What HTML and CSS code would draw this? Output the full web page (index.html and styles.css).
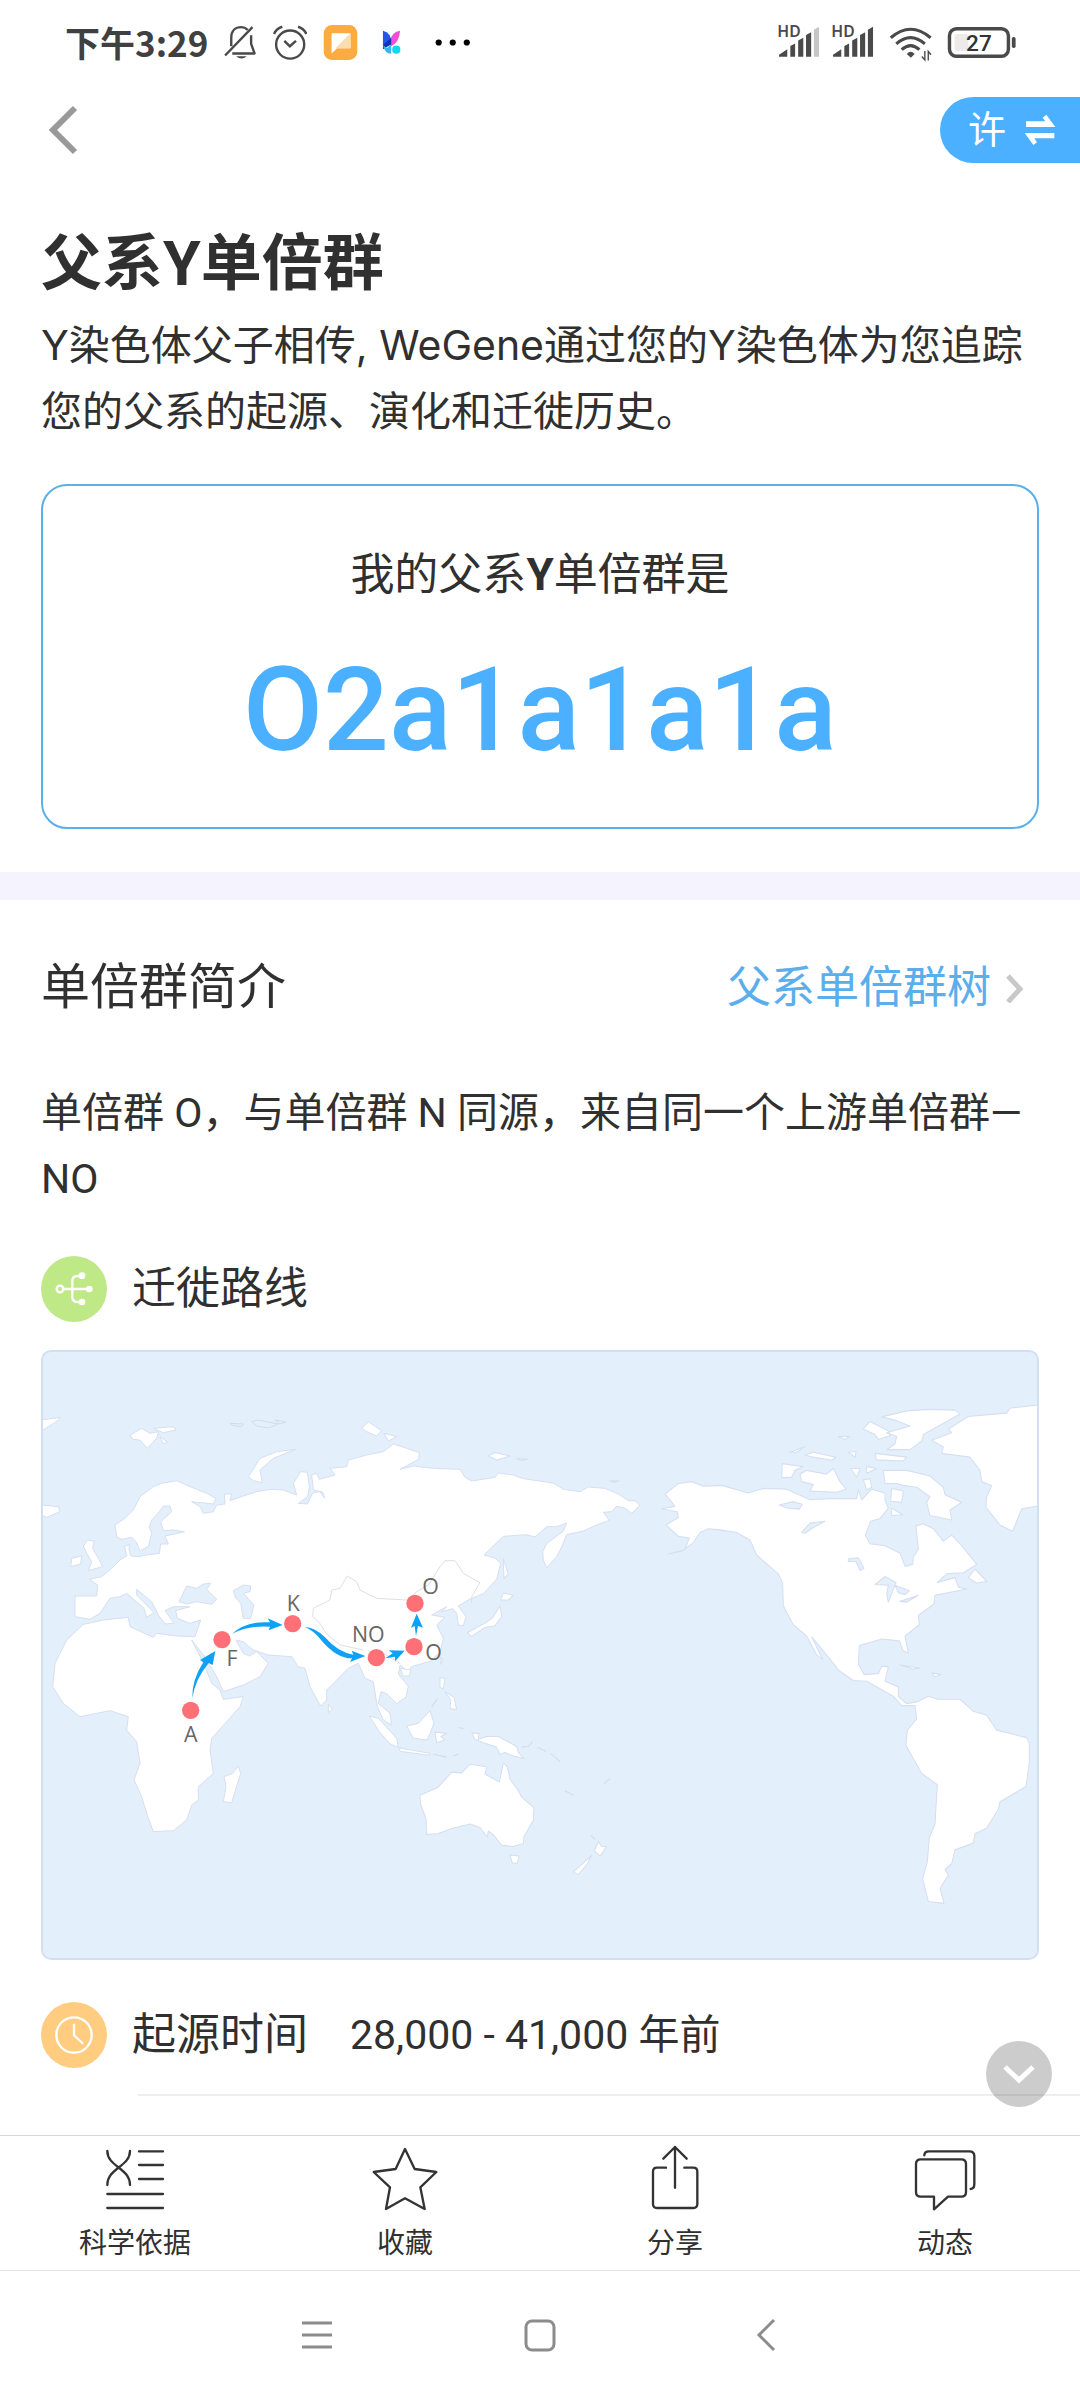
FILE: index.html
```html
<!DOCTYPE html>
<html lang="zh-CN">
<head>
    <meta charset="UTF-8">
    <meta name="viewport" content="width=device-width, initial-scale=1.0">
    <title>父系Y单倍群</title>
    <link rel="stylesheet" href="styles.css">
</head>
<body>
    <!-- Status Bar -->
    <div class="status-bar">
        <div class="status-left">
            <span class="time">下午3:29</span>
            <svg width="33" height="37" viewBox="648 72 96 108" fill="none" stroke="#4a4a4a" stroke-width="7">
                <path d="M669 137V112C669 92 681 81 698 81C706 81 712 84 717 89M727 105V130L737 158H672" stroke-linejoin="round"/>
                <path d="M651 164L731 81"/>
                <path d="M683 166H714Q699 180 683 166Z" fill="#4a4a4a" stroke="none"/>
            </svg>
            <svg width="34" height="37" viewBox="789 72 99 108" fill="none" stroke="#4a4a4a" stroke-width="7">
                <circle cx="839" cy="132" r="41"/>
                <path d="M822 121L838 137L856 121M792 101Q798 86 816 80M886 101Q880 86 862 80"/>
            </svg>
            <svg width="35" height="37" viewBox="933 72 102 108">
                <rect x="935" y="75" width="98" height="102" rx="24" fill="#fcab40"/>
                <path d="M958 99H1013V143H974L958 158Z" fill="#fff"/>
                <path d="M1013 99V143H969Z" fill="#fddcae"/>
            </svg>
            <svg width="35" height="37" viewBox="1080 72 102 108">
                <path d="M1106 92Q1130 98 1130 125L1112 141L1106 135Z" fill="#2257e8"/>
                <path d="M1156 92Q1132 96 1128 120V138Q1154 128 1156 92Z" fill="#f04fd6"/>
                <path d="M1130 112V132L1106 146V134Z" fill="#1930b8"/>
                <path d="M1106 134Q1112 159 1130 159V132L1118 142Z" fill="#36b5f2"/>
                <circle cx="1145" cy="147" r="12" fill="#10d7ef"/>
            </svg>
            <svg width="50" height="37" viewBox="1227 72 144 108">
                <circle cx="1266" cy="126" r="9"/>
                <circle cx="1307" cy="126" r="9"/>
                <circle cx="1348" cy="126" r="9"/>
            </svg>
        </div>
        <div class="status-right">
            <svg width="41" height="37" viewBox="690 72 120 108" fill="#4a4a4a">
                <text class="hd" x="691" y="111">HD</text>
                <path d="M696 168V162L720 146V168ZM729 168V136L743 129V168ZM752 168V120L767 112V168ZM775 168V104L790 96V168Z"/>
                <path d="M798 168V89L813 80V168Z" fill="#c6c6c6"/>
            </svg>
            <svg width="41" height="37" viewBox="690 72 120 108" fill="#4a4a4a">
                <text class="hd" x="691" y="111">HD</text>
                <path d="M696 168V162L720 146V168ZM729 168V136L743 129V168ZM752 168V120L767 112V168ZM775 168V104L790 96V168ZM798 168V89L813 80V168Z"/>
            </svg>
            <svg width="47" height="37" viewBox="1002 72 138 108" fill="none" stroke="#4a4a4a" stroke-width="9">
                <path d="M1019 112Q1077 62 1136 112M1035 130Q1077 93 1119 130M1051 147Q1077 123 1103 147"/>
                <path d="M1066 160Q1077 146 1089 160L1078 171Z" fill="#4a4a4a" stroke="none"/>
                <path d="M1119 151V177L1110 167M1129 179V152L1137 162" stroke-width="4"/>
            </svg>
            <svg width="72" height="37" viewBox="1176 72 210 108" fill="none">
                <rect x="1189" y="86" width="172" height="80" rx="20" stroke="#4a4a4a" stroke-width="10"/>
                <rect x="1204" y="101" width="40" height="50" rx="8" fill="#eeeaea"/>
                <rect x="1371" y="110" width="11" height="32" rx="5" fill="#4a4a4a"/>
                <text class="battery-text" x="1275" y="151" text-anchor="middle" fill="#333">27</text>
            </svg>
        </div>
    </div>

    <!-- Top Nav -->
    <header class="top-nav">
        <button class="back" aria-label="返回">
            <svg width="30" height="50" viewBox="0 0 30 50" fill="none" stroke="#999" stroke-width="6"><path d="M27 3L5 25L27 47"/></svg>
        </button>
        <button class="switch-user">
            <span>许</span>
            <svg width="32" height="32" viewBox="1404 341 96 96" fill="#fff">
                <path d="M1410 380V363H1468L1460 352L1471 343L1498 380Z"/>
                <path d="M1495 398V414H1435L1443 426L1432 434L1406 398Z"/>
            </svg>
        </button>
    </header>

    <main class="content">
        <section class="intro">
            <h1>父系Y单倍群</h1>
            <p class="desc">Y染色体父子相传, WeGene通过您的Y染色体为您追踪您的父系的起源、演化和迁徙历史。</p>
            <div class="result-card">
                <p class="result-label">我的父系<b>Y</b>单倍群是</p>
                <p class="result-value">O2a1a1a1a</p>
            </div>
        </section>

        <section class="detail">
            <div class="section-head">
                <h2>单倍群简介</h2>
                <a href="#">父系单倍群树
                    <svg width="20" height="30" viewBox="0 0 20 30" fill="none" stroke="#c8c8c8" stroke-width="5"><path d="M3 3L15 16L3 29"/></svg>
                </a>
            </div>
            <p class="summary">单倍群 O，与单倍群 N 同源，来自同一个上游单倍群—NO</p>

            <div class="row">
                <svg width="66" height="66" viewBox="33 48 198 198" fill="none" stroke="#fff" stroke-width="7">
                    <circle cx="132" cy="147" r="99" fill="#bfe887" stroke="none"/>
                    <circle cx="90" cy="147" r="10"/>
                    <path d="M101 147H172M150 108H142Q127 108 127 123V171Q127 186 142 186H150"/>
                    <g fill="#fff" stroke="none"><circle cx="156" cy="107" r="10"/><circle cx="178" cy="147" r="10"/><circle cx="156" cy="186" r="10"/></g>
                </svg>
                <h3>迁徙路线</h3>
            </div>

            <!-- Migration Map -->
            <div class="map">
                <svg viewBox="0 0 2994 1830" role="img" aria-label="迁徙路线">
                    <!-- Europe, Asia and Africa -->
                    <g class="land" transform="translate(-33 -30)">
                        <path d="M135 768L200 768L203 735L178 718L215 710L245 685L270 660L290 648L284 620L298 612L297 630L303 648L325 650L350 645L388 640L392 612L415 612L405 588L463 575L430 570L400 572L392 545L425 515L420 498L400 498L388 515L365 540L358 560L365 580L355 620L330 632L318 605L305 592L275 598L260 590L255 555L285 535L310 510L330 470L350 455L370 440L395 430L440 422L480 440L530 460L558 475L550 492L485 485L510 500L520 520L550 515L560 495L585 492L583 462L605 462L600 482L640 468L680 455L720 448L760 450L800 465L790 430L812 395L832 397L838 440L833 470L805 490L832 492L848 460L870 455L884 475L878 456L850 450L845 405L860 400L868 418L915 405L900 385L950 380L955 360L1010 345L1060 335L1090 312L1130 325L1168 338L1166 358L1110 388L1150 378L1200 384L1230 386L1290 388L1305 412L1325 423L1395 412L1405 399L1450 405L1480 416L1570 429L1600 448L1650 455L1675 441L1725 445L1765 462L1795 482L1815 482L1830 496L1805 520L1785 505L1760 498L1745 515L1720 517L1738 541L1700 555L1660 573L1610 584L1595 621L1580 650L1550 684L1540 660L1538 635L1550 611L1600 573L1610 549L1580 560L1550 560L1515 591L1490 584L1420 589L1362 645L1395 654L1412 670L1400 718L1360 761L1320 777L1285 798L1308 830L1300 857L1285 855L1280 820L1268 806L1235 815L1250 800L1205 825L1245 832L1220 855L1240 895L1230 937L1200 964L1145 980L1135 996L1110 975L1105 1002L1135 1039L1128 1071L1100 1091L1070 1061L1053 1055L1045 1090L1080 1120L1085 1155L1060 1140L1042 1100L1030 1025L1005 1015L985 970L955 985L890 1050L890 1080L872 1098L840 1040L825 985L805 980L785 950L715 945L670 930L640 905L618 900L640 940L658 948L680 935L715 970L690 1010L640 1035L580 1055L560 1010L520 945L485 900L520 968L545 1030L570 1050L580 1078L640 1070L630 1100L590 1145L545 1195L540 1230L550 1300L505 1340L505 1380L485 1395L470 1440L430 1472L370 1475L350 1420L335 1370L312 1320L330 1270L320 1205L290 1170L295 1130L240 1112L150 1130L100 1090L68 1040L75 970L110 900L160 853L220 840L295 832L300 860L370 892L380 880L440 888L495 890L512 840L480 850L442 835L437 812L480 800L430 800L405 812L432 850L405 852L385 825L365 785L320 748L320 765L372 818L350 832L342 805L290 760L270 770L240 775L210 820L180 838L135 830Z"/>
                        <path d="M172 600L192 603L188 625L205 655L218 680L175 692L185 665L170 640L160 618ZM125 655L155 648L152 672L122 680Z"/>
                        <path d="M33 495L85 500L90 515L50 532L33 525ZM33 240L92 232L75 248L35 272Z"/>
                        <path d="M300 285L335 265L360 280L385 275L380 295L352 325L330 300L308 298ZM370 265L430 260L438 270L400 278ZM390 290L412 306L400 312Z"/>
                        <path d="M655 410L690 355L740 335L797 328L730 355L690 390L697 428L670 422Z"/>
                        <path d="M995 265L1015 245L1055 272L1040 288L1010 275ZM1062 280L1100 290L1075 303Z"/>
                        <path d="M600 250L640 252L635 260L610 257ZM665 245L685 240L745 252L715 264L680 258ZM735 240L768 246L750 252Z" class="faint"/>
                        <path d="M625 1278L632 1300L605 1388L580 1385L588 1340L582 1310L608 1300ZM895 1092L907 1108L895 1118Z"/>
                        <path d="M1018 1128L1045 1135L1100 1195L1105 1222L1080 1212L1048 1175ZM1108 1224L1200 1240L1200 1246L1110 1234Z"/>
                        <path d="M1130 1158L1165 1150L1200 1112L1212 1150L1192 1200L1150 1195ZM1112 985L1142 990L1138 1008L1118 1008Z"/>
                        <g class="water">
                            <path d="M447 785L470 738L500 745L520 732L542 730L530 748L560 778L545 793L500 785L470 792Z"/>
                            <path d="M610 752L640 735L662 738L660 755L640 760L672 795L662 835L640 835L632 790L618 775Z"/>
                        </g>
                        <path class="border" d="M888 880L870 850L848 830L850 805L900 780L905 750L930 745L952 708L980 725L990 750L1040 775L1130 780L1160 755L1195 735L1230 680L1245 662L1275 662L1300 700L1350 728L1325 770L1325 790M888 880L930 915L1000 930M1060 940L1110 970"/>
                    </g>
                    <!-- East Asian islands and Oceania -->
                    <g class="land" transform="translate(1017 -30) scale(1 1.0714)">
                        <path d="M120 1275L175 1252L215 1210L245 1212L270 1188L320 1195L315 1215L358 1238L370 1185L382 1195L390 1230L415 1262L425 1280L462 1310L460 1345L432 1390L430 1410L400 1418L365 1415L340 1385L325 1375L322 1392L300 1365L270 1355L215 1368L175 1382L140 1385L138 1340L122 1300ZM390 1442L417 1445L412 1465L397 1465Z"/>
                        <path d="M275 1100L297 1102L295 1118L320 1110L355 1110L410 1138L415 1155L432 1172L400 1165L375 1155L360 1160L350 1140L310 1128L285 1118Z"/>
                        <path d="M655 1405L665 1418L680 1418L660 1445L643 1430ZM635 1443L620 1470L595 1497L580 1490L610 1465Z"/>
                        <path d="M370 612L385 655L372 668ZM370 708L400 715L385 728L362 728ZM360 745L365 775L345 800L315 805L275 830L262 820L320 790L340 775Z"/>
                        <path d="M180 945L195 948L190 978L180 972ZM195 985L222 1000L230 1035L210 1032L212 1008ZM182 888L188 895L183 908Z"/>
                        <path d="M165 1098L200 1102L182 1110L195 1120L170 1128ZM325 325L345 315L390 325L350 336ZM410 332L443 334L420 337ZM690 394L718 395L700 398Z"/>
                        <path class="faint" d="M425 1140L445 1138L458 1125M472 1140L498 1152M512 1158L540 1180M555 1262L580 1275M672 1242L690 1228M632 1387L645 1398M160 1160L200 1168M220 1165L235 1160M155 1028L172 1005M235 1085L250 1088"/>
                    </g>
                    <!-- The Americas and Greenland -->
                    <g class="land" transform="translate(1797 90) scale(1 1.1295)">
                        <path d="M75 303L115 275L155 270L190 282L245 280L325 300L370 288L440 290L510 318L570 315L650 315L655 292L665 318L695 290L735 300L735 320L745 340L720 368L692 375L676 412L690 435L735 440L780 460L795 495L818 490L820 470L835 450L828 388L850 382L880 395L910 428L935 412L965 440L1010 490L970 512L920 515L892 538L945 525L955 550L980 555L885 572L882 595L835 625L838 650L795 680L805 725L790 720L778 693L725 688L658 705L655 755L672 782L715 780L725 760L745 762L735 800L775 815L775 840L800 860L830 855L865 840L895 848L960 848L1000 880L1040 890L1070 930L1160 950L1168 965L1168 1015L1158 1080L1080 1120L1075 1140L1040 1190L1005 1205L1000 1230L945 1248L935 1285L915 1300L925 1315L900 1350L912 1390L865 1385L848 1325L862 1280L868 1215L885 1180L892 1075L845 1045L798 970L802 930L830 900L825 865L785 865L760 840L720 820L680 800L640 798L595 770L560 730L515 682L548 742L530 730L500 680L460 650L430 600L428 540L415 515L350 465L330 425L290 405L240 398L205 395L180 405L160 432L125 455L85 462L135 450L148 420L115 415L78 385L115 365L112 350L65 342L105 335Z"/>
                        <path d="M1197 66L1110 75L1100 88L1070 90L985 97L925 130L935 140L875 160L910 178L905 195L990 205L1020 240L1025 270L1055 280L1040 310L1038 338L1080 385L1118 402L1145 342L1197 334Z"/>
                        <path d="M725 98L800 82L870 78L945 80L960 90L850 145L845 162L810 185L740 185L765 170L770 150L740 140L810 122L770 108ZM670 130L690 110L745 135L750 148L715 158L705 145Z"/>
                        <path d="M705 195L800 205L790 215L710 212ZM495 200L520 192L588 205L575 213L520 205ZM450 192L495 177L470 192ZM625 192L648 190L645 205ZM427 222L490 230L465 240L455 258L425 260ZM480 250L500 240L560 250L580 235L600 270L618 290L590 298L510 295L520 278L485 270Z"/>
                        <path d="M730 240L800 240L870 255L910 285L915 305L965 325L930 345L935 372L870 360L860 325L870 310L830 285L790 280L770 275L735 275ZM755 288L790 295L785 325L752 322ZM755 340L788 358L755 360ZM670 265L690 262L695 285L680 292ZM632 235L660 235L650 258ZM680 230L710 235L680 248Z"/>
                        <path d="M985 525L1005 502L1040 535L1010 540ZM875 778L903 782L885 788ZM780 757L840 765L820 768ZM595 150L628 150L615 158Z"/>
                        <g class="water">
                            <path d="M418 332L460 323L487 330L478 343L440 340ZM485 405L510 380L555 375L520 392L495 407ZM625 475L655 472L672 500L660 506L648 482L625 482ZM705 543L735 522L768 538L745 590L740 570L745 545ZM765 545L808 560L795 570L775 565ZM780 588L835 572L800 590Z"/>
                        </g>
                    </g>
                    <!-- Route -->
                    <g transform="translate(-33 -30)">
                        <g fill="#0da2f7">
                            <path d="M487 1075Q485 1020 520 967L510 960L556 933L548 975L536 969Q494 1020 487 1075Z"/>
                            <path d="M607 881Q650 842 720 847L713 835L758 855L716 871L720 860Q660 855 607 881Z"/>
                            <path d="M824 861Q855 862 885 892Q925 938 970 944L965 932L1006 948L960 966L966 955Q920 955 875 902Q850 870 824 861Z"/>
                            <path d="M1066 955L1088 940L1076 931L1124 932L1095 964L1095 950Z"/>
                            <path d="M1158 888L1154 858L1143 863L1160 821L1179 863L1164 858Z"/>
                        </g>
                        <g fill="#ff7076">
                            <circle cx="482" cy="1111" r="26"/>
                            <circle cx="576" cy="899" r="26"/>
                            <circle cx="788" cy="851" r="26"/>
                            <circle cx="1039" cy="953" r="26"/>
                            <circle cx="1152" cy="920" r="26"/>
                            <circle cx="1155" cy="790" r="26"/>
                        </g>
                        <g class="pin-label">
                            <text x="482" y="1207">A</text>
                            <text x="606" y="977">F</text>
                            <text x="790" y="813">K</text>
                            <text x="1015" y="907">NO</text>
                            <text x="1211" y="960">O</text>
                            <text x="1202" y="762">O</text>
                        </g>
                    </g>
                    <rect class="frame" x="3" y="3" width="2988" height="1824" rx="27"/>
                </svg>
            </div>

            <div class="row">
                <svg width="66" height="66" viewBox="33 69 198 198" fill="none" stroke="#fff" stroke-width="7" stroke-linecap="round">
                    <circle cx="132" cy="168" r="99" fill="#ffcc80" stroke="none"/>
                    <circle cx="132" cy="168" r="53"/>
                    <path d="M132 137V169L157 192"/>
                </svg>
                <h3>起源时间</h3>
                <span class="row-value">28,000 - 41,000 年前</span>
            </div>
            <hr class="divider">
        </section>

        <button class="scroll-down" aria-label="向下">
            <svg width="34" height="20" viewBox="0 0 34 20" fill="none" stroke="#fff" stroke-width="5"><path d="M3 3L17 16L31 3"/></svg>
        </button>
    </main>

    <!-- Tab Bar -->
    <nav class="tab-bar">
        <a href="#">
            <svg width="66" height="66" viewBox="186 81 198 198"><path d="M202 93C202 140 270 144 270 195M270 93C270 140 202 144 202 195M297 94H369M297 135H369M297 177H369M202 222H369M202 264H369"/></svg>
            <span>科学依据</span>
        </a>
        <a href="#">
            <svg width="66" height="66" viewBox="996 81 198 198"><path d="M1095 87L1124 147L1189 156L1141 202L1154 267L1095 235L1038 267L1050 202L1001 156L1067 147Z"/></svg>
            <span>收藏</span>
        </a>
        <a href="#">
            <svg width="66" height="66" viewBox="186 411 198 198"><path d="M285 533V411M250 446L285 411L320 446M258 473H231Q219 473 219 485V582Q219 594 231 594H340Q352 594 352 582V485Q352 473 340 473H313"/></svg>
            <span>分享</span>
        </a>
        <a href="#">
            <svg width="66" height="66" viewBox="996 411 198 198"><path d="M1022 448H1144Q1158 448 1158 462V546Q1158 560 1144 560H1104L1062 598V560H1022Q1008 560 1008 546V462Q1008 448 1022 448ZM1033 436Q1033 424 1047 424H1168Q1183 424 1183 438V522Q1183 536 1172 537"/></svg>
            <span>动态</span>
        </a>
    </nav>

    <!-- System Nav -->
    <div class="system-nav">
        <button aria-label="菜单"><svg width="34" height="34" viewBox="0 0 34 34"><path d="M3 5H33M3 17H33M3 29H33"/></svg></button>
        <button aria-label="主屏幕"><svg width="34" height="34" viewBox="0 0 34 34"><rect x="3" y="3" width="28" height="29" rx="6"/></svg></button>
        <button aria-label="后退"><svg width="34" height="34" viewBox="0 0 34 34"><path d="M27 2L12 17L27 32"/></svg></button>
    </div>
</body>
</html>
```
FILE: styles.css
```css
* {
    box-sizing: border-box;
}
body {
    margin: 0;
    min-height: 100vh;
    display: flex;
    flex-direction: column;
    font-family: Roboto, 'Noto Sans CJK SC', sans-serif;
    color: #303030;
    background: #fff;
}
h1, h2, h3, p {
    margin: 0;
    font-weight: 400;
}
a {
    color: inherit;
    text-decoration: none;
}
button {
    padding: 0;
    border: none;
    background: none;
    font: inherit;
    color: inherit;
    cursor: pointer;
}
svg {
    display: block;
    flex: none;
}
.status-bar {
    display: flex;
    justify-content: space-between;
    align-items: center;
    height: 84px;
    padding: 0 63px 0 65px;
}
.status-left, .status-right {
    display: flex;
    align-items: center;
}
.status-left {
    gap: 16px;
}
.status-right {
    gap: 13px;
}
.status-right svg {
    overflow: visible;
}
.time {
    font-family: 'Noto Sans CJK SC', sans-serif;
    font-size: 35px;
    font-weight: 700;
    line-height: 36px;
    color: #404040;
}
.hd {
    font-family: 'Noto Sans', sans-serif;
    font-size: 46px;
    font-weight: 600;
}
.battery-text {
    font-family: Roboto, sans-serif;
    font-size: 66px;
    font-weight: 500;
}
.top-nav {
    display: flex;
    justify-content: space-between;
    align-items: center;
    height: 92px;
    padding-left: 48px;
}
.switch-user {
    display: flex;
    align-items: center;
    gap: 18px;
    height: 66px;
    padding: 0 24px 0 28px;
    border-radius: 33px 0 0 33px;
    background: #4bb0ff;
    color: #fff;
    font-size: 38px;
    line-height: 66px;
}
.content {
    position: relative;
    flex: 1;
}
.intro {
    padding: 45px 41px 43px;
    border-bottom: 28px solid #f5f4fe;
}
.intro h1 {
    font-size: 61px;
    font-weight: 700;
    line-height: 86px;
}
.desc {
    font-family: Inter, 'Noto Sans CJK SC', sans-serif;
    font-size: 41px;
    line-height: 66px;
    margin-top: 5px;
}
.result-card {
    display: flex;
    flex-direction: column;
    align-items: center;
    gap: 39px;
    margin-top: 40px;
    padding: 56px 20px 54px;
    border: 2px solid #5cb0ea;
    border-radius: 26px;
}
.result-label {
    font-size: 44px;
    line-height: 66px;
}
.result-value {
    font-size: 116px;
    font-weight: 500;
    line-height: 126px;
    color: #4bb0ff;
}
.detail {
    padding: 48px 41px 39px;
}
.section-head {
    display: flex;
    justify-content: space-between;
    align-items: center;
}
.section-head h2 {
    font-size: 49px;
    line-height: 80px;
}
.section-head a {
    display: flex;
    align-items: center;
    gap: 14px;
    padding-right: 14px;
    font-size: 44px;
    line-height: 80px;
    color: #5aaeec;
}
.summary {
    font-size: 41px;
    line-height: 66px;
    margin: 52px 0 44px;
}
.row {
    display: flex;
    align-items: center;
    height: 66px;
}
.row h3 {
    margin-left: 25px;
    font-size: 44px;
    line-height: 66px;
}
.row-value {
    margin-left: 42px;
    font-size: 41px;
    line-height: 66px;
}
.map {
    margin: 28px 0 42px;
    border-radius: 10px;
    background: #e3f0fc;
    overflow: hidden;
}
.map svg {
    width: 100%;
}
.frame {
    fill: none;
    stroke: #d2dff0;
    stroke-width: 6;
}
.land {
    fill: #fff;
    stroke: #d6def0;
    stroke-width: 3;
    stroke-linejoin: round;
}
.water {
    fill: #e3f0fc;
}
.land .border {
    fill: none;
    stroke: #e2dce8;
}
.land .faint {
    fill: none;
    stroke: #cfdcea;
}
.pin-label {
    font-family: 'Open Sans', sans-serif;
    font-size: 64px;
    text-anchor: middle;
    fill: #666;
}
.divider {
    height: 2px;
    margin: 26px -41px 0 97px;
    border: none;
    background: #eee;
}
.scroll-down {
    position: absolute;
    right: 28px;
    bottom: 28px;
    display: flex;
    justify-content: center;
    align-items: center;
    width: 66px;
    height: 66px;
    border-radius: 50%;
    background: rgba(0, 0, 0, 0.2);
}
.tab-bar {
    display: grid;
    grid-template-columns: repeat(4, 1fr);
    height: 136px;
    border-top: 1px solid #d8d8d8;
    border-bottom: 1px solid #e0e0e0;
}
.tab-bar a {
    display: flex;
    flex-direction: column;
    align-items: center;
    gap: 11px;
    padding-top: 11px;
    font-size: 28px;
    line-height: 40px;
}
.tab-bar svg {
    fill: none;
    stroke: #333;
    stroke-width: 7;
    stroke-linecap: round;
    stroke-linejoin: round;
    overflow: visible;
}
.system-nav {
    display: flex;
    justify-content: center;
    align-items: center;
    gap: 190px;
    height: 129px;
    padding-bottom: 2px;
}
.system-nav svg {
    fill: none;
    stroke: #8c8c8c;
    stroke-width: 3;
}
```
